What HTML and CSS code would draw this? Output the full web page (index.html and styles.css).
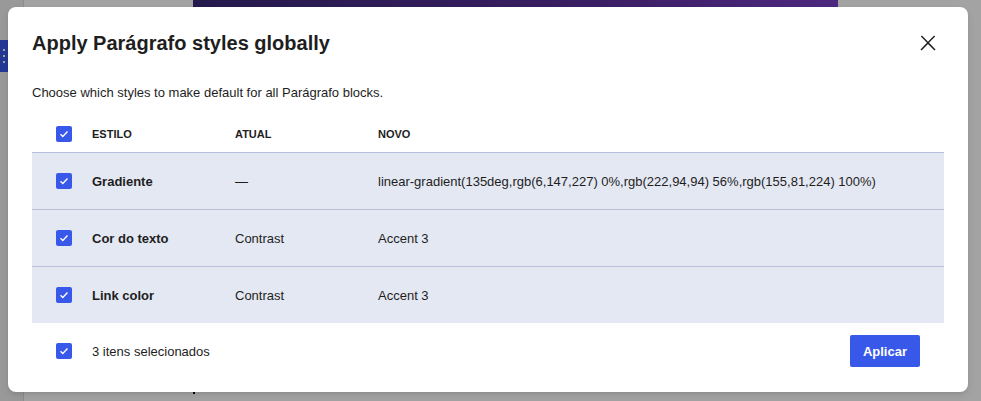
FILE: index.html
```html
<!DOCTYPE html>
<html lang="pt">
<head>
<meta charset="utf-8">
<title>Apply Parágrafo styles globally</title>
<link rel="stylesheet" href="styles.css">
</head>
<body>
<div class="editor">
  <aside class="sidebar">
    <div class="drag-handle"><span></span><span></span><span></span></div>
  </aside>
  <main class="canvas">
    <div class="cover"></div>
    <span class="caret"></span>
  </main>
</div>
<div class="overlay"></div>

<div class="modal" role="dialog" aria-labelledby="modal-title">
  <header class="modal-header">
    <h1 id="modal-title" class="modal-title">Apply Parágrafo styles globally</h1>
    <button class="close-btn" aria-label="Fechar">
      <svg viewBox="0 0 24 24" width="24" height="24"><path d="M13 11.8l6.1-6.3-1-1-6.1 6.2-6.1-6.2-1 1 6.1 6.3-6.5 6.7 1 1 6.5-6.6 6.5 6.6 1-1z"/></svg>
    </button>
  </header>

  <div class="modal-body">
    <p class="intro">Choose which styles to make default for all Parágrafo blocks.</p>

    <div class="styles-table">
      <div class="row head">
        <div class="cell check"><span class="checkbox"><svg viewBox="0 0 16 16"><path d="M4.5 8.2l2.3 2.2 4.7-4.8"/></svg></span></div>
        <div class="cell">Estilo</div>
        <div class="cell">Atual</div>
        <div class="cell">Novo</div>
      </div>
      <div class="row item">
        <div class="cell check"><span class="checkbox"><svg viewBox="0 0 16 16"><path d="M4.5 8.2l2.3 2.2 4.7-4.8"/></svg></span></div>
        <div class="cell label">Gradiente</div>
        <div class="cell">—</div>
        <div class="cell">linear-gradient(135deg,rgb(6,147,227) 0%,rgb(222,94,94) 56%,rgb(155,81,224) 100%)</div>
      </div>
      <div class="row item">
        <div class="cell check"><span class="checkbox"><svg viewBox="0 0 16 16"><path d="M4.5 8.2l2.3 2.2 4.7-4.8"/></svg></span></div>
        <div class="cell label">Cor do texto</div>
        <div class="cell">Contrast</div>
        <div class="cell">Accent 3</div>
      </div>
      <div class="row item">
        <div class="cell check"><span class="checkbox"><svg viewBox="0 0 16 16"><path d="M4.5 8.2l2.3 2.2 4.7-4.8"/></svg></span></div>
        <div class="cell label">Link color</div>
        <div class="cell">Contrast</div>
        <div class="cell">Accent 3</div>
      </div>
    </div>

    <footer class="modal-footer">
      <div class="selection">
        <span class="checkbox"><svg viewBox="0 0 16 16"><path d="M4.5 8.2l2.3 2.2 4.7-4.8"/></svg></span>
        <span class="count">3 itens selecionados</span>
      </div>
      <button class="primary-btn">Aplicar</button>
    </footer>
  </div>
</div>
</body>
</html>
```

FILE: styles.css
```css
* { box-sizing: border-box; }

html, body {
  margin: 0;
  width: 981px;
  height: 401px;
  overflow: hidden;
}

body {
  font-family: "Liberation Sans", Arial, sans-serif;
  color: #1e1e1e;
  position: relative;
  background: #fff;
}

/* editor behind the dialog */
.editor {
  display: flex;
  height: 401px;
}

.sidebar {
  width: 24px;
  background: #f0f0f0;
  border-right: 1px solid #ddd;
  padding-top: 40px;
}

.drag-handle {
  width: 8px;
  height: 32px;
  background: #3858e9;
  display: flex;
  flex-direction: column;
  justify-content: center;
  align-items: center;
  gap: 4px;
}

.drag-handle span {
  width: 2px;
  height: 2px;
  background: #fff;
}

.canvas {
  flex: 1;
  background: #fff;
  position: relative;
}

.cover {
  margin-left: 169px;
  width: 645px;
  height: 40px;
  background: linear-gradient(90deg, #3a2a78 0%, #5a2f9a 60%, #7a3fc8 100%);
}

.caret {
  position: absolute;
  left: 169px;
  top: 390px;
  width: 2px;
  height: 4px;
  background: #000;
}

.overlay {
  position: absolute;
  inset: 0;
  background: rgba(0, 0, 0, 0.36);
}

/* dialog */
.modal {
  position: absolute;
  left: 8px;
  top: 7px;
  width: 960px;
  height: 385px;
  background: #fff;
  border-radius: 8px;
  box-shadow: 0 4px 8px rgba(0, 0, 0, 0.08), 0 2px 3px rgba(0, 0, 0, 0.05);
  display: flex;
  flex-direction: column;
}

.modal-header {
  height: 72px;
  padding: 0 24px;
  display: flex;
  align-items: center;
  justify-content: space-between;
}

.modal-title {
  margin: 0;
  font-size: 20px;
  font-weight: 700;
  color: #1e1e1e;
}

.close-btn {
  width: 32px;
  height: 32px;
  padding: 0;
  border: 0;
  background: none;
  display: flex;
  align-items: center;
  justify-content: center;
}

.close-btn svg { fill: #1e1e1e; }

.modal-body {
  padding: 0 24px;
  flex: 1;
  display: flex;
  flex-direction: column;
}

.intro {
  margin: 5px 0 0;
  font-size: 13px;
  line-height: 18px;
}

.styles-table {
  margin-top: 13px;
}

.row {
  display: grid;
  grid-template-columns: 60px 143px 143px 1fr;
  align-items: center;
  font-size: 13px;
}

.row.head {
  height: 38px;
  border-bottom: 1px solid #b7bfdc;
  font-size: 11px;
  font-weight: 700;
  text-transform: uppercase;
}

.row.item {
  height: 57px;
  background: #e4e8f3;
  border-bottom: 1px solid #b7bfdc;
}

.row.item:last-child { border-bottom: 0; height: 56px; }

.cell.check {
  padding-left: 24px;
  display: flex;
}

.cell.label { font-weight: 700; }

.checkbox {
  width: 16px;
  height: 16px;
  border-radius: 2px;
  background: #3858e9;
  display: inline-flex;
}

.checkbox svg {
  width: 16px;
  height: 16px;
  fill: none;
  stroke: #fff;
  stroke-width: 1.4;
}

.modal-footer {
  height: 56px;
  padding: 0 24px;
  display: flex;
  align-items: center;
  justify-content: space-between;
}

.selection {
  display: flex;
  align-items: center;
  gap: 20px;
  font-size: 13px;
}

.primary-btn {
  height: 32px;
  padding: 0 13px;
  border: 0;
  border-radius: 2px;
  background: #3858e9;
  color: #fff;
  font-family: inherit;
  font-size: 13px;
  font-weight: 700;
}
```
